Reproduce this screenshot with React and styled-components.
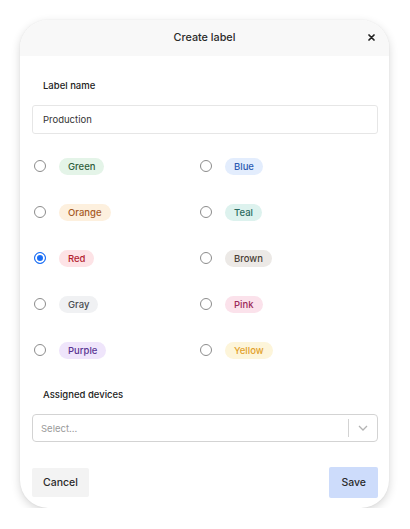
import React from 'react'
import styled, { createGlobalStyle } from 'styled-components'

const Global = createGlobalStyle`
  body {
    margin: 0;
    background: #ffffff;
    font-family: Inter, "Noto Sans", sans-serif;
    color: #2b2b2b;
  }
`

const Card = styled.div`
  margin: 20px 0 0 20px;
  width: 369px;
  height: 488px;
  border-radius: 28px;
  background: #fff;
  box-shadow: 0 3px 10px rgba(0,0,0,0.16), 0 0 2px rgba(0,0,0,0.06);
  overflow: hidden;
  display: flex;
  flex-direction: column;
`

const Header = styled.div`
  height: 36px;
  background: #f8f8f8;
  display: flex;
  align-items: center;
  justify-content: center;
  position: relative;
  font-size: 10.8px;
  font-weight: 500;
  color: #2a2a2a;
  padding-bottom: 1px;
  box-sizing: border-box;
`

const Close = styled.button`
  position: absolute;
  right: 12px;
  top: 11px;
  width: 12px;
  height: 12px;
  padding: 0;
  border: none;
  background: none;
  display: flex;
  align-items: center;
  justify-content: center;
`

const Body = styled.div`
  padding: 23px 11px 10px 12px;
  display: flex;
  flex-direction: column;
  flex: 1;
`

const FieldLabel = styled.div`
  padding-left: 11px;
  font-size: 9.5px;
  line-height: 14px;
  font-weight: 500;
  color: #222;
  margin-bottom: 12px;
`

const TextInput = styled.div`
  height: 27px;
  border: 1px solid #e6e6e6;
  border-radius: 3px;
  display: flex;
  align-items: center;
  padding-left: 10px;
  font-size: 9.5px;
  color: #333;
`

const Grid = styled.div`
  display: grid;
  grid-template-columns: 166px 1fr;
  grid-auto-rows: 46px;
  margin: 9px 0 15px;
`

const Option = styled.div`
  display: flex;
  align-items: center;
  padding-left: 2px;
`

const Radio = styled.span`
  width: 10px;
  height: 10px;
  border-radius: 50%;
  box-sizing: content-box;
  border: 1px solid ${p => (p.checked ? '#1a6ef5' : '#8c8c8c')};
  background: ${p => (p.checked ? '#1a6ef5' : '#fff')};
  box-shadow: ${p => (p.checked ? 'inset 0 0 0 2px #fff' : 'none')};
  margin-right: 13px;
`

const Pill = styled.span`
  display: inline-flex;
  align-items: center;
  height: 17px;
  padding: 0 9px;
  border-radius: 9px;
  font-size: 9.5px;
  font-weight: 500;
  background: ${p => p.bg};
  color: ${p => p.fg};
`

const SelectBox = styled.div`
  height: 26px;
  border: 1px solid #d3d3d3;
  border-radius: 4px;
  display: flex;
  align-items: center;
  font-size: 9.5px;
  color: #9a9a9a;
  padding-left: 8px;
`

const Placeholder = styled.span`
  flex: 1;
`

const Divider = styled.span`
  width: 1px;
  height: 18px;
  background: #d3d3d3;
`

const Chevron = styled.span`
  width: 28px;
  display: flex;
  justify-content: center;
`

const Footer = styled.div`
  margin-top: auto;
  display: flex;
  justify-content: space-between;
  align-items: center;
`

const Button = styled.button`
  border: none;
  border-radius: 2px;
  font-family: inherit;
  font-size: 10.5px;
  font-weight: 500;
  color: #2a2a2a;
  background: ${p => (p.primary ? '#cddcfb' : '#f3f3f3')};
  height: ${p => (p.primary ? '31px' : '29px')};
  padding: 0 ${p => (p.primary ? '12px' : '11px')};
`

const colors = [
  ['Green', '#e4f4e8', '#2f5d3a', false],
  ['Blue', '#e3edfd', '#2c5bb3', false],
  ['Orange', '#fdf0de', '#a65a1e', false],
  ['Teal', '#ddf2ee', '#2a6a60', false],
  ['Red', '#fde3e6', '#b3222f', true],
  ['Brown', '#ece9e6', '#4a3f36', false],
  ['Gray', '#f0f1f3', '#4a4c51', false],
  ['Pink', '#fbe2eb', '#9c2a5a', false],
  ['Purple', '#efe5fb', '#5a3592', false],
  ['Yellow', '#fdf5da', '#e2a12c', false],
]

export default function App() {
  return (
    <>
      <Global />
      <Card>
        <Header>
          Create label
          <Close>
            <svg width="7" height="7" viewBox="0 0 7 7">
              <path d="M1 1L6 6M6 1L1 6" stroke="#222" strokeWidth="1.7" strokeLinecap="round" />
            </svg>
          </Close>
        </Header>
        <Body>
          <FieldLabel>Label name</FieldLabel>
          <TextInput>Production</TextInput>
          <Grid>
            {colors.map(([name, bg, fg, checked]) => (
              <Option key={name}>
                <Radio checked={checked} />
                <Pill bg={bg} fg={fg}>{name}</Pill>
              </Option>
            ))}
          </Grid>
          <FieldLabel>Assigned devices</FieldLabel>
          <SelectBox>
            <Placeholder>Select...</Placeholder>
            <Divider />
            <Chevron>
              <svg width="10" height="6" viewBox="0 0 10 6">
                <path d="M1 1L5 5L9 1" fill="none" stroke="#b3b3b3" strokeWidth="1.3" />
              </svg>
            </Chevron>
          </SelectBox>
          <Footer>
            <Button>Cancel</Button>
            <Button primary>Save</Button>
          </Footer>
        </Body>
      </Card>
    </>
  )
}
